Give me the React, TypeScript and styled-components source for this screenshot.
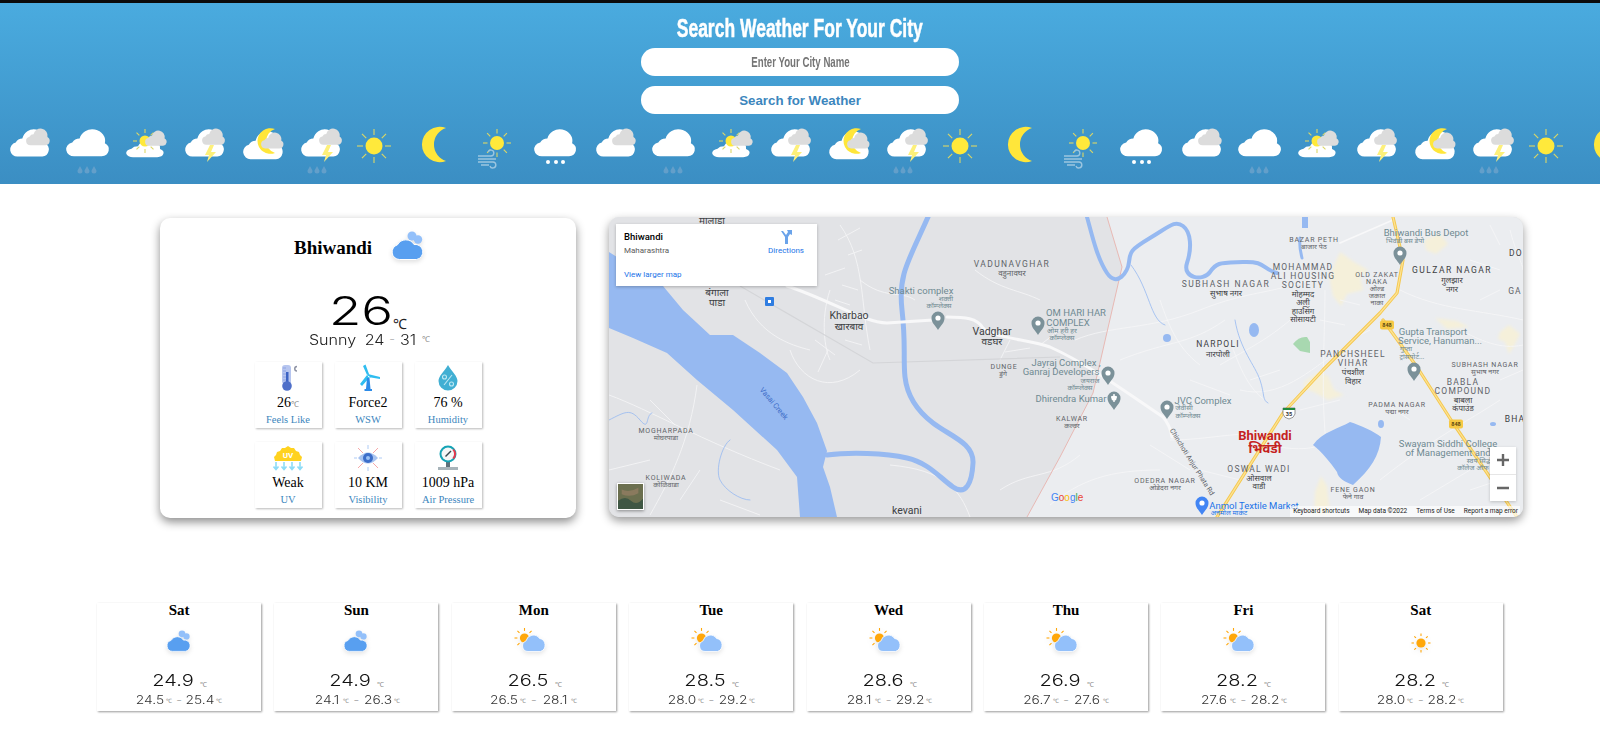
import React from "react";
import styled, { createGlobalStyle } from "styled-components";

const GlobalStyle = createGlobalStyle`
  html, body { margin: 0; padding: 0; background: #fff; }
  body { font-family: "Liberation Serif", serif; overflow-x: hidden; }
  * { box-sizing: border-box; }
`;

const Page = styled.div`
  width: 1600px;
  height: 746px;
  overflow: hidden;
`;

const Header = styled.header`
  height: 184px;
  border-top: 3px solid #0b0b0b;
  background: linear-gradient(180deg, #4aabdf 0%, #3b8ec3 100%);
  display: flex;
  flex-direction: column;
  align-items: center;
  padding-top: 8px;
`;

const Title = styled.h1`
  margin: 0;
  height: 34px;
  line-height: 34px;
  color: #fff;
  font-family: "Liberation Sans", sans-serif;
  font-size: 25px;
  font-weight: 700;
  white-space: nowrap;
  transform: scaleX(0.7);
  -webkit-text-stroke: 0.5px #fff;
`;

const CityPill = styled.div`
  width: 318px;
  height: 28px;
  margin-top: 3px;
  border-radius: 14px;
  background: #fff;
  display: flex;
  justify-content: center;
  overflow: hidden;
`;

const CityInput = styled.input`
  flex: 0 0 461px;
  height: 28px;
  border: 0;
  background: transparent;
  text-align: center;
  outline: none;
  transform: scaleX(0.69);
  font-family: "Liberation Sans", sans-serif;
  font-size: 14px;
  font-weight: 700;
  &::placeholder { color: #757575; opacity: 1; }
`;

const SearchButton = styled.button`
  width: 318px;
  height: 28px;
  margin-top: 10px;
  border: 0;
  border-radius: 14px;
  background: #fff;
  color: #3c86bd;
  font-family: "Liberation Sans", sans-serif;
  font-size: 13.3px;
  font-weight: 700;
`;

const Strip = styled.div`
  width: 100%;
  height: 50px;
  margin-top: 11px;
  padding-left: 1px;
  display: flex;
  overflow: hidden;
`;

const StripCell = styled.svg<{ $w: number }>`
  flex: 0 0 ${(p) => p.$w}px;
  width: ${(p) => p.$w}px;
  height: 50px;
  overflow: visible;
`;

const Main = styled.main`
  display: flex;
  align-items: flex-start;
  gap: 33px;
  padding: 33px 0 0 160px;
`;

const NowCard = styled.section`
  width: 416px;
  height: 300px;
  margin-top: 1px;
  background: #fff;
  border-radius: 10px;
  box-shadow: 0 4px 10px rgba(0, 0, 0, 0.45);
  display: flex;
  flex-direction: column;
  align-items: center;
`;

const CityRow = styled.div`
  height: 50px;
  margin: 5px 18px 0 0;
  display: flex;
  align-items: center;
  gap: 25px;
`;

const CityName = styled.div`
  font-size: 19px;
  font-weight: 700;
  color: #000;
  width: 73px;
  white-space: nowrap;
`;

const CityIcon = styled.svg`
  width: 32px;
  height: 29px;
  margin-bottom: 5px;
  overflow: visible;
  filter: drop-shadow(0 2px 2px rgba(0, 0, 0, 0.12));
`;

const NowTemp = styled.div`
  margin-top: 18px;
  height: 40px;
  display: flex;
  align-items: flex-end;
  color: #000;
`;

const Wide = styled.span<{ $size: number; $weight?: number; $scale?: number }>`
  display: inline-block;
  font-family: Inter, sans-serif;
  font-size: ${(p) => p.$size}px;
  font-weight: ${(p) => p.$weight ?? 300};
  transform: scaleX(${(p) => p.$scale ?? 1.25});
  line-height: 1;
  white-space: nowrap;
`;

const BigNumber = styled(Wide)`
  width: 64px;
  text-align: center;
`;

const Unit = styled.span<{ $size: number; $color?: string }>`
  font-family: "Liberation Sans", sans-serif;
  font-size: ${(p) => p.$size}px;
  color: ${(p) => p.$color ?? "#888"};
  line-height: 1;
`;

const NowSummary = styled.div`
  margin-top: -1px;
  height: 20px;
  display: flex;
  align-items: center;
  gap: 1px;
  color: #222;
`;

const SummaryText = styled(Wide)`
  margin: 0 6px;
`;

const TileGrid = styled.div`
  margin-top: 12px;
  display: grid;
  grid-template-columns: repeat(3, 67px);
  grid-auto-rows: 66px;
  gap: 14px 13px;
`;

const Tile = styled.div`
  background: #fff;
  box-shadow: 1px 1px 2px rgba(0, 0, 0, 0.28);
  display: flex;
  flex-direction: column;
  align-items: center;
  padding-top: 2px;
`;

const TileIcon = styled.svg`
  width: 30px;
  height: 28px;
`;

const TileValue = styled.div`
  margin-top: 3px;
  font-size: 14px;
  line-height: 16px;
  color: #000;
  white-space: nowrap;
`;

const TileLabel = styled.div`
  margin-top: 2px;
  font-size: 10.5px;
  line-height: 14px;
  color: #3c86bd;
  white-space: nowrap;
`;

const MapFrame = styled.section`
  position: relative;
  width: 914px;
  height: 300px;
  border-radius: 10px;
  overflow: hidden;
  box-shadow: 0 4px 10px rgba(0, 0, 0, 0.4);
  background: #e5e6e9;
`;

const MapDrawing = styled.svg`
  display: block;
  width: 914px;
  height: 300px;
`;

const MapLabel = styled.text<{ $size: number; $color: string; $gap?: number; $weight?: number }>`
  font-family: Roboto, "Noto Sans", "Noto Sans Devanagari", "Lohit Devanagari", sans-serif;
  font-size: ${(p) => p.$size}px;
  font-weight: ${(p) => p.$weight ?? 400};
  letter-spacing: ${(p) => p.$gap ?? 0}px;
  fill: ${(p) => p.$color};
  text-anchor: middle;
`;

const PlacePanel = styled.div`
  position: absolute;
  left: 7px;
  top: 7px;
  width: 201px;
  height: 62px;
  background: #fff;
  box-shadow: 0 1px 3px rgba(0, 0, 0, 0.25);
  font-family: Roboto, sans-serif;
  display: flex;
  justify-content: space-between;
  padding: 6px 13px 0 8px;
`;

const PlaceName = styled.div`
  font-size: 9.5px;
  font-weight: 500;
  line-height: 13px;
  color: #000;
`;

const PlaceRegion = styled.div`
  margin-top: 2px;
  font-size: 8px;
  line-height: 12px;
  color: #5b5b5b;
`;

const PanelLink = styled.div`
  font-size: 8px;
  line-height: 12px;
  color: #1a73e8;
`;

const LargerLink = styled(PanelLink)`
  margin-top: 12px;
`;

const DirectionsBox = styled.div`
  display: flex;
  flex-direction: column;
  align-items: center;
  gap: 1px;
`;

const ZoomBox = styled.div`
  position: absolute;
  right: 7px;
  bottom: 16px;
  width: 26px;
  height: 54px;
  background: #fff;
  box-shadow: 0 1px 3px rgba(0, 0, 0, 0.2);
  display: flex;
  flex-direction: column;
`;

const ZoomKey = styled.div<{ $sep?: boolean }>`
  flex: 1;
  display: flex;
  align-items: center;
  justify-content: center;
  border-top: ${(p) => (p.$sep ? "1px solid #e6e6e6" : "0")};
`;

const Thumb = styled.svg`
  position: absolute;
  left: 8px;
  bottom: 7px;
  width: 27px;
  height: 27px;
  border: 1px solid #fff;
  box-shadow: 0 1px 3px rgba(0, 0, 0, 0.4);
`;

const Attribution = styled.div`
  position: absolute;
  right: 3px;
  bottom: 0;
  height: 11px;
  display: flex;
  gap: 9px;
  padding: 0 2px 0 3px;
  background: rgba(255, 255, 255, 0.65);
  font-family: Roboto, sans-serif;
  font-size: 6.5px;
  line-height: 11px;
  color: #222;
  white-space: nowrap;
`;

const GoogleMark = styled.div`
  position: absolute;
  left: 442px;
  bottom: 13px;
  display: flex;
  font-family: "Liberation Sans", sans-serif;
  font-size: 10px;
  line-height: 13px;
`;

const MarkLetter = styled.span<{ $c: string }>`
  color: ${(p) => p.$c};
`;

const Forecast = styled.section`
  display: grid;
  grid-template-columns: repeat(8, 164.1px);
  gap: 13.3px;
  width: 1406px;
  height: 108px;
  margin: 85px auto 0;
`;

const DayCard = styled.article`
  background: #fff;
  box-shadow: 1px 1px 2px rgba(0, 0, 0, 0.4);
  display: flex;
  flex-direction: column;
  align-items: center;
`;

const DayName = styled.div`
  height: 15px;
  line-height: 15px;
  font-size: 15px;
  font-weight: 700;
  color: #000;
`;

const DayIcon = styled.svg`
  margin-top: 8px;
  width: 36px;
  height: 28px;
  overflow: visible;
  filter: drop-shadow(0 2px 2px rgba(0, 0, 0, 0.1));
`;

const DayTemp = styled.div`
  margin-top: 18px;
  height: 16px;
  display: flex;
  align-items: flex-end;
  justify-content: center;
  gap: 5px;
  color: #111;
`;

const DayTempValue = styled(Wide)`
  width: 44px;
  text-align: center;
`;

const DayRange = styled.div`
  margin-top: 6px;
  height: 13px;
  display: flex;
  align-items: center;
  justify-content: center;
  gap: 2px;
  color: #333;
`;

const RangeValue = styled(Wide)`
  width: 28px;
  text-align: center;
`;

const RangeDash = styled.span`
  margin: 0 3px;
  font-family: "Liberation Sans", sans-serif;
  font-size: 8px;
  color: #777;
`;

const CLOUD = "M8 28a7.500 7.500 0 0 1-2-14.800A8 8 0 0 1 13 9 12 12 0 0 1 37 14 7.500 7.500 0 0 1 34 28Z";

const WhiteCloud = ({ x, y, s = 1, sy }: { x: number; y: number; s?: number; sy?: number }) => (
  <path d={CLOUD} fill="#fff" transform={`translate(${x} ${y}) scale(${s} ${sy ?? s})`} />
);

const GreyCloud = ({ x, y, s = 0.58 }: { x: number; y: number; s?: number }) => (
  <path d={CLOUD} fill="#dcdcdc" transform={`translate(${x} ${y}) scale(${s})`} />
);

const Drops = ({ x, y }: { x: number; y: number }) => (
  <g fill="#639fca">
    {[0, 7, 14].map((d) => (
      <path key={d} d={`M${x + d} ${y}c-1.500 3-2.500 4-2.500 5a2.500 2.500 0 0 0 5 0c0-1-1-2-2.500-5Z`} />
    ))}
  </g>
);

const Bolt = ({ x, y }: { x: number; y: number }) => (
  <path d={`M${x + 5} ${y}L${x} ${y + 10}h4L${x + 2} ${y + 17}L${x + 11} ${y + 7}h-5L${x + 9} ${y}Z`} fill="#fdf07a" />
);

const Sun = ({ x, y, r = 8, ray = 16, c = "#ffe93b", rc = "#dcd765" }: { x: number; y: number; r?: number; ray?: number; c?: string; rc?: string }) => (
  <g>
    {[0, 45, 90, 135, 180, 225, 270, 315].map((a) => (
      <line
        key={a}
        x1={x}
        y1={y - r - 2.5}
        x2={x}
        y2={y - ray}
        stroke={rc}
        strokeWidth={1.1}
        transform={`rotate(${a} ${x} ${y})`}
      />
    ))}
    <circle cx={x} cy={y} r={r} fill={c} />
  </g>
);

const Moon = ({ x, y, h }: { x: number; y: number; h: number }) => (
  <path
    d={`M${x} ${y}A${h * 0.536} ${h * 0.536} 0 1 0 ${x} ${y + h}A${h * 0.525} ${h * 0.525} 0 0 1 ${x} ${y}Z`}
    fill="#ffe63a"
  />
);

const stripKinds: { w: number; draw: React.ReactNode }[] = [
  {
    w: 56,
    draw: (
      <g>
        <WhiteCloud x={9} y={5} s={0.95} />
        <GreyCloud x={25} y={4} s={0.58} />
      </g>
    ),
  },
  {
    w: 60,
    draw: (
      <g>
        <WhiteCloud x={9} y={5} s={1.05} sy={0.94} />
        <Drops x={23} y={41} />
      </g>
    ),
  },
  {
    w: 54,
    draw: (
      <g>
        <WhiteCloud x={9} y={16} s={0.92} sy={0.58} />
        <Sun x={28} y={16} r={5.5} ray={12} />
        <GreyCloud x={28} y={6} s={0.53} />
      </g>
    ),
  },
  {
    w: 66,
    draw: (
      <g>
        <WhiteCloud x={14} y={5} s={0.95} />
        <GreyCloud x={31} y={4} s={0.56} />
        <Bolt x={34} y={20} />
      </g>
    ),
  },
  {
    w: 50,
    draw: (
      <g>
        <WhiteCloud x={6} y={7} s={0.97} />
        <Moon x={38} y={4} h={24} />
        <GreyCloud x={24} y={8} s={0.55} />
      </g>
    ),
  },
  {
    w: 64,
    draw: (
      <g>
        <WhiteCloud x={14} y={5} s={0.95} />
        <GreyCloud x={32} y={4} s={0.56} />
        <Bolt x={35} y={20} />
        <Drops x={23} y={41} />
      </g>
    ),
  },
  { w: 46, draw: <Sun x={23} y={21} r={8.5} ray={17} /> },
  { w: 74, draw: <Moon x={49} y={3} h={33} /> },
  {
    w: 50,
    draw: (
      <g>
        <Sun x={26} y={18} r={7} ray={14} />
        <path
          d="M7 31h13a3 3 0 1 0-3-4M7 34h18M7 37h15a3 3 0 1 1-3 4M10 40h8"
          fill="none"
          stroke="#9cc6e0"
          strokeWidth={1.4}
        />
      </g>
    ),
  },
  {
    w: 66,
    draw: (
      <g>
        <WhiteCloud x={13} y={5} s={1.03} sy={0.94} />
        <circle cx={27} cy={37} r={2} fill="#fff" />
        <circle cx={35} cy={37} r={2} fill="#fff" />
        <circle cx={42} cy={37} r={2} fill="#fff" />
      </g>
    ),
  },
];

const stripCells = Array.from({ length: 28 }, (_, i) => stripKinds[i % 10]);

const CloudyArt = () => (
  <g>
    <circle cx={20} cy={5} r={4.5} fill="#93c0fa" />
    <circle cx={26} cy={8.5} r={4.2} fill="#93c0fa" />
    <path
      d="M7.500 28.500a7.500 7.500 0 0 1-2-14.700A9.500 9.500 0 0 1 22 13.500a7.600 7.600 0 0 1 2.500 15Z"
      fill="#589ff0"
      stroke="#fff"
      strokeWidth={1}
    />
  </g>
);

const PartlyArt = () => (
  <g>
    <Sun x={8.5} y={12} r={4.6} ray={10} c="#ffa70a" rc="#ffa70a" />
    <path
      d="M12 25.500a5.500 5.500 0 0 1-2-10.600 7.500 7.500 0 0 1 13.500-2.500 6.800 6.800 0 0 1 1 13.100Z"
      fill="#93c0fa"
      stroke="#fff"
      strokeWidth={0.8}
    />
  </g>
);

const ClearArt = () => <Sun x={18} y={17} r={4.6} ray={9.5} c="#ffa70a" rc="#ffa70a" />;

const days: { name: string; kind: "cloudy" | "partly" | "clear"; temp: string; low: string; high: string }[] = [
  { name: "Sat", kind: "cloudy", temp: "24.9", low: "24.5", high: "25.4" },
  { name: "Sun", kind: "cloudy", temp: "24.9", low: "24.1", high: "26.3" },
  { name: "Mon", kind: "partly", temp: "26.5", low: "26.5", high: "28.1" },
  { name: "Tue", kind: "partly", temp: "28.5", low: "28.0", high: "29.2" },
  { name: "Wed", kind: "partly", temp: "28.6", low: "28.1", high: "29.2" },
  { name: "Thu", kind: "partly", temp: "26.9", low: "26.7", high: "27.6" },
  { name: "Fri", kind: "partly", temp: "28.2", low: "27.6", high: "28.2" },
  { name: "Sat", kind: "clear", temp: "28.2", low: "28.0", high: "28.2" },
];

type Lbl = [number, number, string, number?, string?, number?, number?];
const GREY = "#5f6368";
const TEAL = "#6f8a92";
const DARK = "#3c4043";

const labels: Lbl[] = [
  [712, 224, "मालाडा", 10, DARK],
  [717, 296, "बंगाला", 10, DARK],
  [717, 306, "पाडा", 10, DARK],
  [849, 319, "Kharbao", 10.5, DARK],
  [849, 330, "खारबाव", 10, DARK],
  [921, 294, "Shakti complex", 9.5, TEAL],
  [946, 301, "शक्ती", 7, TEAL],
  [939, 308, "कॉम्प्लेक्स", 7, TEAL],
  [1012, 267, "VADUNAVGHAR", 8.5, GREY, 1.4],
  [1012, 276, "वडुनावघर", 8, GREY],
  [992, 335, "Vadghar", 10.5, DARK],
  [992, 345, "वडघर", 10, DARK],
  [1004, 369, "DUNGE", 7, GREY, 0.8],
  [1003, 376, "डुंगे", 7, GREY],
  [1066, 366, "Jayraj Complex ,", 9.5, TEAL],
  [1061, 375, "Ganraj Developers", 9.5, TEAL],
  [1090, 383, "जयराज", 7, TEAL],
  [1080, 390, "कॉम्प्लेक्स", 7, TEAL],
  [1071, 402, "Dhirendra Kumar", 9.5, TEAL],
  [666, 433, "MOGHARPADA", 7, GREY, 0.8],
  [666, 440, "मोघरपाडा", 7, GREY],
  [666, 480, "KOLIWADA", 7, GREY, 0.8],
  [666, 487, "कोळिवाडा", 7, GREY],
  [907, 514, "kevani", 10.5, DARK],
  [1076, 316, "OM HARI HAR", 9.5, TEAL],
  [1068, 326, "COMPLEX", 9.5, TEAL],
  [1062, 333, "ओम हरी हर", 7, TEAL],
  [1062, 340, "कॉम्प्लेक्स", 7, TEAL],
  [1226, 287, "SUBHASH NAGAR", 8.5, GREY, 1.5],
  [1226, 296, "सुभाष नगर", 8, DARK],
  [1303, 270, "MOHAMMAD", 8.5, GREY, 1.2],
  [1303, 279, "ALI HOUSING", 8.5, GREY, 1.2],
  [1303, 288, "SOCIETY", 8.5, GREY, 1.2],
  [1303, 297, "मोहम्मद", 8, DARK],
  [1303, 305, "अली", 8, DARK],
  [1303, 314, "हाउसिंग", 8, DARK],
  [1303, 322, "सोसायटी", 8, DARK],
  [1314, 242, "BAZAR PETH", 7, GREY, 0.8],
  [1314, 249, "बाजार पेठ", 7, GREY],
  [1426, 236, "Bhiwandi Bus Depot", 9.5, TEAL],
  [1405, 243, "भिवंडी बस डेपो", 7, TEAL],
  [1516, 256, "DO", 8.5, DARK, 1.2],
  [1452, 273, "GULZAR NAGAR", 8.5, DARK, 1.5],
  [1452, 283, "गुलझार", 8, DARK],
  [1452, 292, "नगर", 8, DARK],
  [1515, 294, "GA", 8.5, GREY, 1.2],
  [1377, 277, "OLD ZAKAT", 7, GREY, 0.8],
  [1377, 284, "NAKA", 7, GREY, 0.8],
  [1377, 291, "ओल्ड", 7, GREY],
  [1377, 298, "जकात", 7, GREY],
  [1377, 305, "नाका", 7, GREY],
  [1218, 347, "NARPOLI", 8.5, DARK, 1.2],
  [1218, 357, "नारपोली", 8, DARK],
  [1353, 357, "PANCHSHEEL", 8.5, GREY, 1.2],
  [1353, 366, "VIHAR", 8.5, GREY, 1.2],
  [1353, 375, "पंचशील", 8, DARK],
  [1353, 384, "विहार", 8, DARK],
  [1433, 335, "Gupta Transport", 9.5, TEAL],
  [1440, 344, "Service, Hanuman...", 9.5, TEAL],
  [1406, 351, "गुप्ता", 7, TEAL],
  [1412, 359, "ट्रांसपोर्ट...", 7, TEAL],
  [1485, 367, "SUBHASH NAGAR", 7, GREY, 0.8],
  [1485, 374, "सुभाष नगर", 7, GREY],
  [1463, 385, "BABLA", 8.5, GREY, 1.2],
  [1463, 394, "COMPOUND", 8.5, GREY, 1.2],
  [1463, 403, "बाबला", 8, DARK],
  [1463, 411, "कंपाउंड", 8, DARK],
  [1397, 407, "PADMA NAGAR", 7, GREY, 0.8],
  [1397, 414, "पद्मा नगर", 7, GREY],
  [1515, 422, "BHA", 8.5, DARK, 1.2],
  [1448, 447, "Swayam Siddhi College", 9.5, TEAL],
  [1448, 456, "of Management and", 9.5, TEAL],
  [1480, 463, "स्वयं सिद्धी", 7, TEAL],
  [1473, 470, "कॉलेज ऑफ", 7, TEAL],
  [1259, 472, "OSWAL WADI", 8.5, GREY, 1.2],
  [1259, 481, "ओसवाल", 8, DARK],
  [1259, 489, "वाडी", 8, DARK],
  [1072, 421, "KALWAR", 7, GREY, 0.8],
  [1072, 428, "कल्वर", 7, GREY],
  [1203, 404, "JVC Complex", 9.5, TEAL],
  [1184, 410, "जेवीसी", 7, TEAL],
  [1188, 418, "कॉम्प्लेक्स", 7, TEAL],
  [1165, 483, "ODEDRA NAGAR", 7, GREY, 0.8],
  [1165, 490, "ओडेदरा नगर", 7, GREY],
  [1353, 492, "FENE GAON", 7, GREY, 0.8],
  [1353, 499, "फेने गाव", 7, GREY],
  [1254, 509, "Anmol Textile Market", 9.5, "#1a73e8"],
  [1229, 515, "अनमोल मार्केट", 7, "#1a73e8"],
  [1265, 440, "Bhiwandi", 13, "#c5221f", 0, 700],
  [1265, 453, "भिवंडी", 13, "#c5221f", 0, 700],
];

const thinRoads = [
  "M1075 340 C1110 325 1150 330 1200 310 S1270 295 1325 275",
  "M1120 360 C1170 340 1190 345 1225 320",
  "M1220 365 C1245 350 1280 335 1310 300",
  "M1325 290 C1325 340 1320 400 1327 450",
  "M1240 390 C1280 400 1310 370 1340 350",
  "M1170 440 C1210 440 1240 430 1280 435",
  "M1270 445 C1290 450 1310 450 1320 445",
  "M1050 505 C1080 480 1110 470 1160 470",
  "M1380 480 C1430 440 1470 420 1500 400",
  "M1460 330 C1480 340 1500 350 1523 345",
  "M1400 290 C1440 310 1480 310 1523 320",
  "M840 225 C865 260 860 300 870 350",
  "M860 280 C885 300 900 290 915 300",
  "M830 290 C820 320 825 350 830 360",
  "M790 350 C800 380 830 395 860 370",
  "M745 300 C760 335 790 345 810 350",
  "M609 395 C650 410 700 440 780 470",
  "M650 515 C670 480 690 440 697 385",
  "M970 517 C960 490 945 470 890 465",
  "M1000 490 C1030 470 1050 480 1080 455",
  "M975 270 C1000 290 1020 290 1040 300",
  "M1160 300 C1170 330 1180 350 1200 365",
  "M1230 340 C1240 370 1250 390 1265 400",
  "M1510 230 C1515 250 1523 265 1523 270",
  "M1000 360 L1010 340 M1005 352 L1030 348 M1040 345 L1060 330",
  "M835 300 L850 305 M842 285 L858 290 M825 275 L845 268 M838 240 L860 228 M848 255 L862 250",
  "M815 340 L835 355 M845 340 L862 345 M828 350 L818 372",
  "M1320 320 L1345 325 M1340 300 L1360 305 M1350 340 L1370 330 M1300 410 L1340 400",
  "M1400 440 L1420 455 M1470 490 L1500 480 M1420 500 L1470 470 M1380 400 L1410 420",
  "M1250 380 L1280 370 M1190 380 L1230 395 M1150 445 L1190 470 M1200 470 L1240 480",
  "M1480 300 L1500 290 M1470 260 L1500 270 M1490 225 L1500 245 M1500 380 L1523 370",
  "M680 500 L700 470 M720 500 L760 515 M609 470 L650 460 M650 400 L675 425",
];

const pins: [number, number][] = [
  [938, 320],
  [1038, 325],
  [1400, 255],
  [1414, 371],
  [1108, 375],
  [1114, 400],
  [1167, 409],
];

const Pin = ({ x, y, c = "#7b9199" }: { x: number; y: number; c?: string }) => (
  <g transform={`translate(${x} ${y})`}>
    <path d="M0 10C-3 5-6.500 3-6.500-2a6.500 6.500 0 0 1 13 0C6.500 3 3 5 0 10Z" fill={c} />
    <circle cx={0} cy={-2} r={2.6} fill="#fff" />
  </g>
);

const MapArt = () => (
  <MapDrawing viewBox="609 217 914 300">
    <defs>
      <filter id="soft">
        <feGaussianBlur stdDeviation="1.6" />
      </filter>
    </defs>
    <rect x={609} y={217} width={914} height={300} fill="#e2e3e6" />
    <path d="M1107 217L1122 267 1093 393 1060 457 1027 517H1523V217Z" fill="#ebedf0" />
    <g fill="#f5f0da" filter="url(#soft)">
      <path d="M1332 270l8-18 14 10 14 8-8 6 3 14-16 4-6 12-8-10-3-14Z" />
      <path d="M1424 240l16-6 8 10-12 10-10-4Z" />
      <path d="M1435 318l22 3 12 6-22 2Z" />
      <path d="M1500 332l9-7 11 9-6 12-5 8-4-12-7-3Z" />
      <path d="M1304 382l14-10 10 4 6 14 10 5-16 5-14-8-10-3Z" />
      <path d="M1315 492l6-16 6 10 3 28h-16Z" />
    </g>
    <g fill="none" stroke="#f6f6f7" strokeWidth={0.8}>
      {thinRoads.map((d) => (
        <path key={d} d={d} />
      ))}
    </g>
    <path d="M740 286L873 363 1060 357" fill="none" stroke="#d4d5d8" strokeWidth={1.2} />
    <path
      d="M1107 217L1122 267 1093 393 1060 457 1027 517"
      fill="none"
      stroke="#e8b3ae"
      strokeWidth={0.9}
    />
    <g fill="#96b9f1">
      <path d="M609 252L663 286 683 310 710 335 733 335 760 353 787 373 803 397 817 423 827 451 823 467 830 487 837 517H800L797 477 777 450 733 410 697 380 667 353 633 338 609 328Z" />
      <path d="M1313 445C1322 432 1340 428 1350 422 1360 425 1375 432 1381 437 1380 455 1370 470 1353 485 1345 482 1338 478 1337 472 1330 462 1322 452 1313 445Z" />
      <ellipse cx={1254} cy={330} rx={5} ry={7} />
      <ellipse cx={1167} cy={338} rx={4} ry={4} />
      <ellipse cx={1381} cy={424} rx={3} ry={4} />
      <rect x={1302} y={217} width={6} height={11} />
      <ellipse cx={1493} cy={424} rx={3} ry={2} />
    </g>
    <g fill="none" stroke="#96b9f1" strokeLinecap="round" strokeLinejoin="round">
      <path
        d="M827 455C850 452 885 453 907 458S940 478 953 487 972 483 973 463 950 436 933 423 907 395 905 377 906 345 902 310 908 262 928 217"
        strokeWidth={5}
      />
      <path d="M973 463C972 450 966 445 960 441" strokeWidth={1} />
      <path
        d="M1087 217C1092 235 1097 258 1107 273S1128 272 1129 262 1130 250 1150 238 1175 220 1183 226 1192 248 1187 263 1203 282 1210 272 1220 263 1243 262 1262 269 1277 273"
        strokeWidth={4}
      />
      <path d="M1300 238C1299 245 1300 250 1302 258" strokeWidth={3} />
      <path
        d="M1131 265C1150 290 1150 320 1165 325M1235 320C1240 350 1255 365 1260 380S1262 400 1268 403M609 420C625 412 630 408 640 420S645 415 652 413M730 440C722 445 715 470 720 480 S740 500 750 500"
        strokeWidth={0.8}
      />
    </g>
    <path d="M1293 344q6-8 14-7l3 5 0 11-10-2Z" fill="#a8d8b0" />
    <g fill="none" stroke="#f8f8f9" strokeLinecap="round" strokeWidth={3}>
      <path d="M787 286C830 300 865 323 887 323L933 320" />
      <path d="M947 317C965 317 977 318 983 328 990 337 1030 340 1050 347 1090 365 1130 395 1163 417Q1170 425 1172 437" />
      <path d="M1340 243L1393 220" strokeWidth={1.6} />
    </g>
    <g fill="none" strokeLinecap="round" strokeLinejoin="round">
      <path d="M1393 217L1403 260 1397 293 1380 313 1323 370 1283 413 1217 517" stroke="#f4c84f" strokeWidth={3.2} />
      <path d="M1383 320L1417 367 1453 423 1517 517" stroke="#f4c84f" strokeWidth={3.2} />
      <path d="M1393 217L1403 260 1397 293 1380 313 1323 370 1283 413 1217 517" stroke="#fde293" strokeWidth={1.3} />
      <path d="M1383 320L1417 367 1453 423 1517 517" stroke="#fde293" strokeWidth={1.3} />
    </g>
    {labels.map(([x, y, t, size = 9, color = GREY, gap, weight], i) => (
      <MapLabel key={i} x={x} y={y} $size={size} $color={color} $gap={gap} $weight={weight}>
        {t}
      </MapLabel>
    ))}
    <MapLabel x={0} y={0} $size={7.5} $color="#3f6fc9" transform="translate(772 405) rotate(50)">
      Vasai Creek
    </MapLabel>
    <MapLabel x={0} y={0} $size={7} $color={GREY} transform="translate(1190 463) rotate(58)">
      Chinchoti Anjur Phata Rd
    </MapLabel>
    {pins.map(([x, y]) => (
      <Pin key={`${x}-${y}`} x={x} y={y} />
    ))}
    <path d="M1114 394v8M1111 397h6" stroke="#fff" strokeWidth={1.4} />
    <Pin x={1202} y={505} c="#4285f4" />
    <rect x={765} y={297} width={9} height={9} rx={1} fill="#2f7de1" />
    <rect x={768} y={300} width={3} height={3} fill="#fff" />
    {[
      [1387, 325],
      [1456, 424],
    ].map(([x, y]) => (
      <g key={x}>
        <rect x={x - 7} y={y - 4.5} width={14} height={9} rx={2} fill="#f6c945" />
        <MapLabel x={x} y={y + 2} $size={5.5} $color="#5b4a10" $weight={700}>
          848
        </MapLabel>
      </g>
    ))}
    <path d="M1283 408h12v6q-1 4-6 5-5-1-6-5Z" fill="#fff" stroke="#555" strokeWidth={0.6} />
    <rect x={1283} y={408} width={12} height={2} fill="#1f8a3d" />
    <MapLabel x={1289} y={416} $size={5.5} $color="#333" $weight={700}>
      35
    </MapLabel>
  </MapDrawing>
);

const ThermoArt = () => (
  <TileIcon viewBox="0 0 30 28">
    <rect x={9} y={1} width={9} height={19} rx={3} fill="#b6c5ef" />
    <path d="M10 4h3M10 7h3M10 10h3M10 13h3M10 16h3" stroke="#8ea3e3" strokeWidth={1} />
    <rect x={13} y={8} width={2.5} height={13} fill="#3c63c4" />
    <circle cx={14} cy={22} r={4.8} fill="#4f6fc9" />
    <path d="M24 2.500a2.200 2.200 0 1 0 0 4.500" fill="none" stroke="#8c91a3" strokeWidth={1.5} />
  </TileIcon>
);

const TurbineArt = () => (
  <TileIcon viewBox="0 0 30 28">
    <path d="M14 11L10 2l2.500-1.500L16 10ZM15 10l12 3v2l-12-2ZM14 11l-7 9 2 2 8-9Z" fill="#2fbdf0" />
    <path d="M14 14h2.500l1 11h-4.500Z" fill="#2c8be8" />
    <rect x={11.5} y={25} width={7.5} height={2} fill="#2c8be8" />
  </TileIcon>
);

const DropArt = () => (
  <TileIcon viewBox="0 0 30 28">
    <path d="M15 1C11 8 5.500 12 5.500 17a9.500 9.500 0 0 0 19 0C24.500 12 19 8 15 1Z" fill="#41afd3" />
    <path d="M19 11l-8 10" stroke="#bfe8f3" strokeWidth={1.1} />
    <circle cx={11.5} cy={13} r={2} fill="none" stroke="#bfe8f3" strokeWidth={1.1} />
    <circle cx={18.5} cy={20} r={2} fill="none" stroke="#bfe8f3" strokeWidth={1.1} />
  </TileIcon>
);

const UvArt = () => (
  <TileIcon viewBox="0 0 30 28">
    <path
      d="M2 17l-1-4 2-2 1-3 3-1 2-3 3 0 3-2 3 2 3 0 2 3 3 1 1 3 2 2-1 4Z"
      fill="#ffd21f"
    />
    <text x={15} y={14} textAnchor="middle" fontFamily="Roboto, sans-serif" fontWeight={700} fontSize={8} fill="#fff">
      UV
    </text>
    {[3, 11, 19, 27].map((x) => (
      <path key={x} d={`M${x} 18v7m-2.500-2.500 2.500 3 2.500-3`} fill="none" stroke="#8ddcf7" strokeWidth={1.6} />
    ))}
  </TileIcon>
);

const EyeArt = () => (
  <TileIcon viewBox="0 0 30 28">
    <path d="M5 4l5 5M25 4l-5 5M5 24l5-5M25 24l-5-5" stroke="#f6a9a9" strokeWidth={1} />
    <path d="M15 1v4M15 23v4M1 14h3M26 14h3" stroke="#aecbf5" strokeWidth={1} />
    <path d="M5 14q10-11 20 0-10 11-20 0Z" fill="#a9c4f0" />
    <circle cx={15} cy={14} r={5} fill="#3d6ec9" />
    <circle cx={15} cy={14} r={2} fill="#9bc0f4" />
  </TileIcon>
);

const GaugeArt = () => (
  <TileIcon viewBox="0 0 30 28">
    <rect x={13} y={17} width={4} height={6} fill="#5d7079" />
    <rect x={5} y={23} width={20} height={3} fill="#a8b4ba" />
    <circle cx={15} cy={10} r={8.5} fill="#14a3b5" />
    <circle cx={15} cy={10} r={6.5} fill="#f4f7f7" />
    <path d="M21 5a8 8 0 0 1 0 10l-1.500-1a6 6 0 0 0 0-8Z" fill="#e8374c" />
    <path d="M12.500 12.500L18 7" stroke="#37474f" strokeWidth={1.4} />
  </TileIcon>
);

const tiles = [
  { art: <ThermoArt />, value: "26", unit: true, label: "Feels Like" },
  { art: <TurbineArt />, value: "Force2", label: "WSW" },
  { art: <DropArt />, value: "76 %", label: "Humidity" },
  { art: <UvArt />, value: "Weak", label: "UV" },
  { art: <EyeArt />, value: "10 KM", label: "Visibility" },
  { art: <GaugeArt />, value: "1009 hPa", label: "Air Pressure" },
];

const App = () => {
  return (
    <Page>
      <GlobalStyle />
      <Header>
        <Title>Search Weather For Your City</Title>
        <CityPill>
          <CityInput placeholder="Enter Your City Name" />
        </CityPill>
        <SearchButton>Search for Weather</SearchButton>
        <Strip>
          {stripCells.map((c, i) => (
            <StripCell key={i} $w={c.w} viewBox={`0 0 ${c.w} 50`}>
              {c.draw}
            </StripCell>
          ))}
        </Strip>
      </Header>
      <Main>
        <NowCard>
          <CityRow>
            <CityName>Bhiwandi</CityName>
            <CityIcon viewBox="0 0 32 29">
              <CloudyArt />
            </CityIcon>
          </CityRow>
          <NowTemp>
            <BigNumber $size={40} $scale={1.32}>26</BigNumber>
            <Unit $size={14} $color="#222">℃</Unit>
          </NowTemp>
          <NowSummary>
            <SummaryText $size={14} $scale={1.15}>Sunny</SummaryText>
            <SummaryText $size={14} $scale={1.15}>24</SummaryText>
            <Unit $size={8}>~</Unit>
            <SummaryText $size={14} $scale={1.15}>31</SummaryText>
            <Unit $size={8}>℃</Unit>
          </NowSummary>
          <TileGrid>
            {tiles.map((t) => (
              <Tile key={t.label}>
                {t.art}
                <TileValue>
                  {t.value}
                  {t.unit && <Unit $size={8}>℃</Unit>}
                </TileValue>
                <TileLabel>{t.label}</TileLabel>
              </Tile>
            ))}
          </TileGrid>
        </NowCard>
        <MapFrame>
          <MapArt />
          <PlacePanel>
            <div>
              <PlaceName>Bhiwandi</PlaceName>
              <PlaceRegion>Maharashtra</PlaceRegion>
              <LargerLink>View larger map</LargerLink>
            </div>
            <DirectionsBox>
              <svg width={14} height={14} viewBox="0 0 14 14">
                <path d="M2 1l4 6v7h3V7l2-3 2 1V0H8l1 2-2 3-3-4Z" fill="#6aa3ea" />
              </svg>
              <PanelLink>Directions</PanelLink>
            </DirectionsBox>
          </PlacePanel>
          <Thumb viewBox="0 0 27 27">
            <rect width={27} height={27} fill="#6b6f4f" />
            <path d="M0 18q8-6 14 0t13-2v11H0Z" fill="#3f5744" />
            <path d="M4 6q8 4 18-2v6q-9 5-18 1Z" fill="#8a7a5e" />
          </Thumb>
          <GoogleMark>
            <MarkLetter $c="#4285f4">G</MarkLetter>
            <MarkLetter $c="#ea4335">o</MarkLetter>
            <MarkLetter $c="#fbbc05">o</MarkLetter>
            <MarkLetter $c="#4285f4">g</MarkLetter>
            <MarkLetter $c="#34a853">l</MarkLetter>
            <MarkLetter $c="#ea4335">e</MarkLetter>
          </GoogleMark>
          <ZoomBox>
            <ZoomKey>
              <svg width={12} height={12} viewBox="0 0 12 12">
                <path d="M6 0v12M0 6h12" stroke="#666" strokeWidth={2.4} />
              </svg>
            </ZoomKey>
            <ZoomKey $sep>
              <svg width={12} height={12} viewBox="0 0 12 12">
                <path d="M0 6h12" stroke="#666" strokeWidth={2.4} />
              </svg>
            </ZoomKey>
          </ZoomBox>
          <Attribution>
            <span>Keyboard shortcuts</span>
            <span>Map data ©2022</span>
            <span>Terms of Use</span>
            <span>Report a map error</span>
          </Attribution>
        </MapFrame>
      </Main>
      <Forecast>
        {days.map((d, i) => (
          <DayCard key={i}>
            <DayName>{d.name}</DayName>
            <DayIcon viewBox="0 0 36 28">
              {d.kind === "cloudy" && (
                <g transform="translate(6 4) scale(0.75)">
                  <CloudyArt />
                </g>
              )}
              {d.kind === "partly" && <PartlyArt />}
              {d.kind === "clear" && <ClearArt />}
            </DayIcon>
            <DayTemp>
              <DayTempValue $size={16}>{d.temp}</DayTempValue>
              <Unit $size={7}>℃</Unit>
            </DayTemp>
            <DayRange>
              <RangeValue $size={11}>{d.low}</RangeValue>
              <Unit $size={6}>℃</Unit>
              <RangeDash>~</RangeDash>
              <RangeValue $size={11}>{d.high}</RangeValue>
              <Unit $size={6}>℃</Unit>
            </DayRange>
          </DayCard>
        ))}
      </Forecast>
    </Page>
  );
};

export default App;
